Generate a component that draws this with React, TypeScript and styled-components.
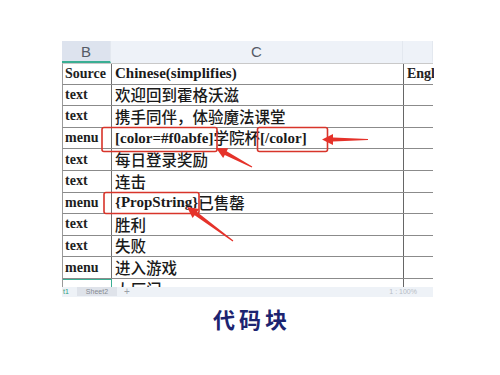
import styled, { createGlobalStyle } from "styled-components";

const GlobalStyle = createGlobalStyle`
  html, body {
    margin: 0;
    padding: 0;
    background: #ffffff;
  }
  body {
    font-family: "Liberation Serif", "Noto Sans CJK SC", serif;
  }
`;

const LATIN = `"Liberation Serif", "Noto Sans CJK SC", serif`;

interface Row {
  source: string;
  chinese: string;
}

const rows: Row[] = [
  { source: "text", chinese: "欢迎回到霍格沃滋" },
  { source: "text", chinese: "携手同伴，体验魔法课堂" },
  { source: "menu", chinese: "[color=#f0abfe]学院杯[/color]" },
  { source: "text", chinese: "每日登录奖励" },
  { source: "text", chinese: "连击" },
  { source: "menu", chinese: "{PropString}已售罄" },
  { source: "text", chinese: "胜利" },
  { source: "text", chinese: "失败" },
  { source: "menu", chinese: "进入游戏" },
];

// crude split so latin and chinese parts can get their own font
function splitText(s: string) {
  const parts: { text: string; cjk: boolean }[] = [];
  for (const ch of s) {
    const cjk = /[\u3000-\u9fff\uff00-\uffef]/.test(ch);
    const last = parts[parts.length - 1];
    if (last && last.cjk === cjk) last.text += ch;
    else parts.push({ text: ch, cjk });
  }
  return parts;
}

export default function App() {
  return (
    <Page>
      <GlobalStyle />
      <Sheet>
        <HeaderRow>
          <HeadCell $active>B</HeadCell>
          <HeadCell>C</HeadCell>
          <HeadCell />
        </HeaderRow>

        <BodyRow $first>
          <SourceCell>Source</SourceCell>
          <TextCell>
            <Latin>Chinese(simplifies)</Latin>
          </TextCell>
          <ExtraCell>Engl</ExtraCell>
        </BodyRow>

        {rows.map((r, i) => (
          <BodyRow key={i}>
            <SourceCell>{r.source}</SourceCell>
            <TextCell>
              {splitText(r.chinese).map((p, j) =>
                p.cjk ? <Cjk key={j}>{p.text}</Cjk> : <Latin key={j}>{p.text}</Latin>
              )}
            </TextCell>
            <ExtraCell />
          </BodyRow>
        ))}

        <PartialRow>
          <SelectedCell />
          <PartialText>
            <Cjk>大厅门</Cjk>
          </PartialText>
          <ExtraCell />
        </PartialRow>

        <TabBar>
          <TabActive>t1</TabActive>
          <Tab>Sheet2</Tab>
          <TabPlus>+</TabPlus>
          <TabSpacer />
          <Zoom>1 : 100%</Zoom>
        </TabBar>
      </Sheet>

      <Title>代码块</Title>

      <Annotations width="500" height="375" viewBox="0 0 500 375">
        <rect x="102" y="127.5" width="115" height="24" rx="2" fill="none" stroke="#d8342a" strokeWidth="1.6" />
        <rect x="257.5" y="127.5" width="70" height="24" rx="2" fill="none" stroke="#d8342a" strokeWidth="1.6" />
        <rect x="104" y="192.5" width="95" height="21" rx="2" fill="none" stroke="#d8342a" strokeWidth="1.6" />
        <Arrow x1={252} y1={167} x2={216} y2={148} />
        <Arrow x1={368} y1={139.5} x2={322} y2={139.5} />
        <Arrow x1={233} y1={241} x2={187} y2={207} />
      </Annotations>
    </Page>
  );
}

function Arrow(props: { x1: number; y1: number; x2: number; y2: number }) {
  const { x1, y1, x2, y2 } = props;
  const dx = x2 - x1;
  const dy = y2 - y1;
  const len = Math.hypot(dx, dy);
  const ux = dx / len;
  const uy = dy / len;
  const nx = -uy;
  const ny = ux;
  const head = 11;
  const bx = x2 - ux * head;
  const by = y2 - uy * head;
  const pts = [
    [x1 + nx * 0.6, y1 + ny * 0.6],
    [bx + nx * 2, by + ny * 2],
    [bx + nx * 5.5, by + ny * 5.5],
    [x2, y2],
    [bx - nx * 5.5, by - ny * 5.5],
    [bx - nx * 2, by - ny * 2],
    [x1 - nx * 0.6, y1 - ny * 0.6],
  ]
    .map(p => p.join(","))
    .join(" ");
  return <polygon points={pts} fill="#e5322a" />;
}

const Page = styled.div`
  position: relative;
  width: 500px;
  height: 375px;
  overflow: hidden;
  background: #fff;
`;

const Sheet = styled.div`
  margin: 41px 0 0 62px;
  width: 371px;
`;

const HeaderRow = styled.div`
  display: grid;
  grid-template-columns: 49px 292px 30px;
  height: 22px;
  background: #eef2f8;
`;

const HeadCell = styled.div<{ $active?: boolean }>`
  display: flex;
  align-items: center;
  justify-content: center;
  font-family: "Liberation Sans", "Noto Sans", sans-serif;
  font-size: 15px;
  color: #555b66;
  background: ${p => (p.$active ? "#dde3ee" : "transparent")};
  border-bottom: 2px solid ${p => (p.$active ? "#3aae93" : "transparent")};
  border-right: 1px solid #e3e8ef;
  box-sizing: border-box;
`;

const BodyRow = styled.div<{ $first?: boolean }>`
  display: grid;
  grid-template-columns: 49px 292px 30px;
  height: 21.6px;
  box-sizing: border-box;
  border-bottom: 1.5px solid #8b8b8b;
  border-top: ${p => (p.$first ? "1px solid #c9c9c9" : "none")};
  border-left: 1px solid #9a9a9a;
`;

const PartialRow = styled.div`
  display: grid;
  grid-template-columns: 49px 292px 30px;
  height: 8px;
  overflow: hidden;
  border-left: 1px solid #9a9a9a;
`;

const SourceCell = styled.div`
  display: flex;
  align-items: center;
  padding-left: 2px;
  font-family: ${LATIN};
  font-weight: bold;
  font-size: 14px;
  line-height: 1;
  color: #1e1e1e;
  border-right: 1.5px solid #6f6f6f;
  overflow: hidden;
  white-space: nowrap;
`;

const SelectedCell = styled.div`
  border: 1.5px solid #3aae93;
  border-bottom: none;
  margin-left: -1px;
`;

const TextCell = styled.div`
  display: flex;
  align-items: center;
  padding-left: 3px;
  line-height: 1;
  color: #1a1a1a;
  border-right: 1.5px solid #666;
  overflow: hidden;
  white-space: nowrap;
`;

const PartialText = styled.div`
  padding: 3px 0 0 3px;
  line-height: 1;
  color: #1a1a1a;
  border-right: 1.5px solid #666;
  overflow: hidden;
  white-space: nowrap;
`;

const ExtraCell = styled.div`
  display: flex;
  align-items: center;
  padding-left: 3px;
  font-family: ${LATIN};
  font-weight: bold;
  font-size: 14px;
  line-height: 1;
  color: #222;
  overflow: hidden;
  white-space: nowrap;
`;

const Latin = styled.span`
  font-family: ${LATIN};
  font-weight: bold;
  font-size: 15px;
  line-height: 1;
`;

const Cjk = styled.span`
  font-family: "Noto Sans CJK SC", sans-serif;
  font-size: 15.5px;
  font-weight: 500;
  line-height: 1;
`;

const TabBar = styled.div`
  display: flex;
  align-items: center;
  height: 10px;
  background: #eef2f7;
  font-family: "Liberation Sans", "Noto Sans", sans-serif;
  font-size: 7px;
  color: #8a8f98;
`;

const TabActive = styled.span`
  color: #2c9c80;
  padding: 0 8px 0 1px;
`;

const Tab = styled.span`
  background: #dfe3ea;
  padding: 1px 9px;
  color: #858a92;
`;

const TabPlus = styled.span`
  padding-left: 7px;
  font-size: 10px;
  color: #9aa0a8;
`;

const TabSpacer = styled.span`
  flex: 1;
`;

const Zoom = styled.span`
  padding-right: 16px;
  color: #b7bcc4;
`;

const Title = styled.div`
  margin-top: 5px;
  padding-left: 4px;
  text-align: center;
  font-family: "Noto Sans CJK SC", sans-serif;
  font-weight: bold;
  font-size: 22px;
  letter-spacing: 4px;
  color: #1c2470;
`;

const Annotations = styled.svg`
  position: absolute;
  left: 0;
  top: 0;
  pointer-events: none;
`;
